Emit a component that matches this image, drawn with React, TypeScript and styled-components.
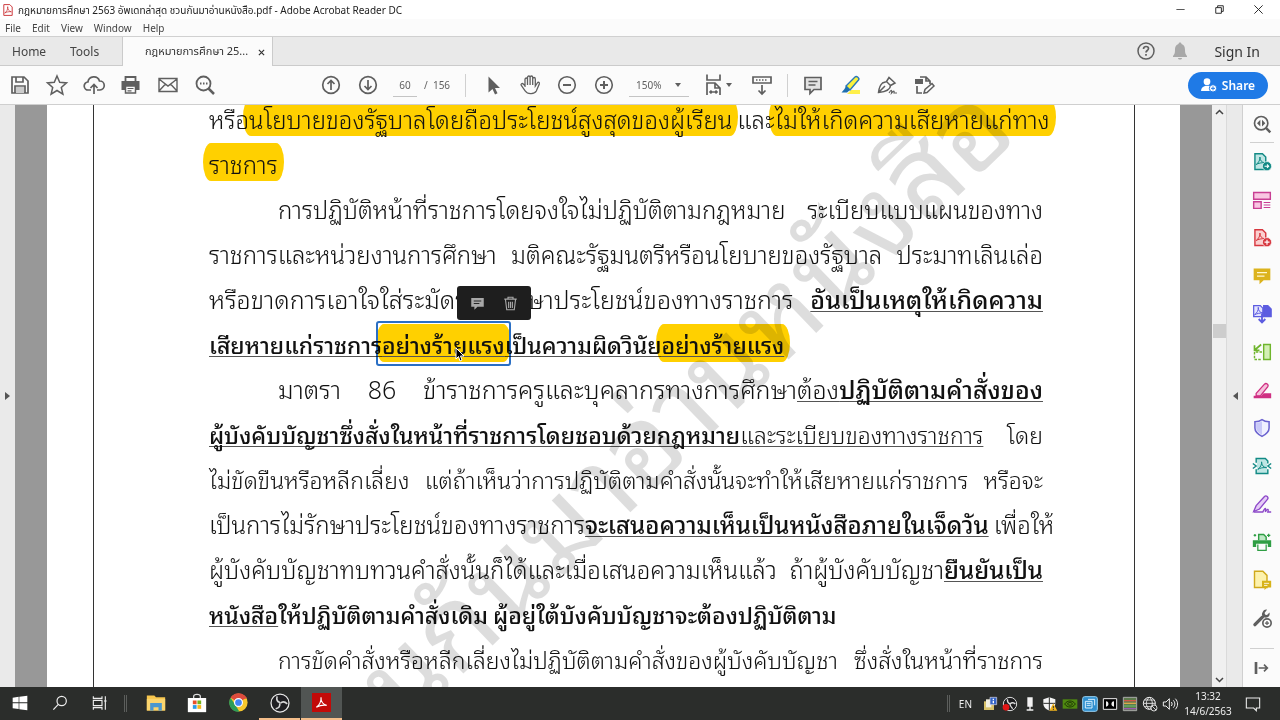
import React from 'react';
import styled, { createGlobalStyle, css } from 'styled-components';

const UI = "'Noto Sans', 'Open Sans', 'Noto Sans Thai', 'Liberation Sans', sans-serif";
const DOC = "'TH Sarabun New', 'Noto Sans Thai Looped', 'Noto Sans Thai', 'Noto Sans', sans-serif";

const Global = createGlobalStyle`
  * { box-sizing: border-box; }
  html, body, #root { height: 100%; }
  body { margin: 0; font-family: ${UI}; color: #3c3c3c; }
  button { border: 0; background: none; padding: 0; margin: 0; font: inherit; color: inherit; }
  a { color: inherit; text-decoration: none; }
`;

const Shell = styled.div`
  display: flex;
  flex-direction: column;
  height: 100vh;
  overflow: hidden;
  background: #fbfbfb;
`;

const TitleBar = styled.header`
  display: flex;
  align-items: center;
  height: 19px;
  flex: none;
  padding: 0 2px;
  background: #fff;
  color: #222;
`;
const Title = styled.h1`
  flex: 1;
  margin: 0 0 0 4px;
  font-size: 10px;
  line-height: 18px;
  font-weight: 400;
  white-space: nowrap;
`;
const WindowButton = styled.button`
  display: grid;
  place-items: center;
  width: 39px;
  height: 19px;
`;

const MenuBar = styled.nav`
  display: flex;
  align-items: center;
  gap: 11px;
  height: 17px;
  flex: none;
  padding-left: 5px;
  font-size: 10px;
  line-height: 16px;
  color: #444;
`;

const TabBar = styled.div`
  display: flex;
  align-items: stretch;
  height: 30px;
  flex: none;
  background: #e9e9e9;
  border-top: 1px solid #d0d0d0;
  border-bottom: 1px solid #cbcbcb;
  font-size: 12px;
`;
const TabButton = styled.button<{ $width: number }>`
  width: ${(p) => p.$width}px;
  padding-left: 12px;
  text-align: left;
  color: #444;
`;
const OpenTab = styled.div`
  display: flex;
  align-items: center;
  justify-content: space-between;
  width: 151px;
  height: 29px;
  padding: 0 7px 0 22px;
  background: #fbfbfb;
  border: solid #cbcbcb;
  border-width: 0 1px;
  font-size: 11px;
  color: #333;
  white-space: nowrap;
`;
const Spacer = styled.div`
  flex: 1;
`;
const Account = styled.div`
  display: flex;
  align-items: center;
  gap: 10px;
  padding-right: 20px;
  color: #5f5f5f;
`;
const SignIn = styled.a`
  margin-left: 12px;
  font-size: 14px;
  color: #333;
`;

const ToolBar = styled.div`
  display: flex;
  align-items: center;
  height: 39px;
  flex: none;
  padding: 0 12px 0 8px;
  border-bottom: 1px solid #cfcfcf;
  color: #5f5f5f;
  font-size: 10px;
`;
const ToolGroup = styled.div<{ $before?: number }>`
  display: flex;
  align-items: center;
  gap: 13px;
  margin-left: ${(p) => p.$before ?? 0}px;
`;
const IconButton = styled.button`
  display: grid;
  place-items: center;
  width: 24px;
  height: 24px;
  flex: none;
`;
const PageInput = styled.input`
  width: 24px;
  height: 24px;
  padding: 0;
  border: 0;
  border-bottom: 1px solid #c4c4c4;
  background: none;
  font: inherit;
  color: inherit;
  text-align: center;
`;
const PageCount = styled.span`
  width: 25px;
  margin-left: -6px;
  white-space: pre;
`;
const Rule = styled.span`
  width: 1px;
  height: 23px;
  background: #d0d0d0;
`;
const ZoomSelect = styled.span`
  display: flex;
  align-items: center;
  width: 60px;
  height: 24px;
  border-bottom: 1px solid #c4c4c4;
  select {
    appearance: none;
    flex: 1;
    min-width: 0;
    padding: 0 0 0 7px;
    border: 0;
    background: none;
    font: inherit;
    color: inherit;
  }
`;
const Caret = styled.span`
  border: 3px solid transparent;
  border-top: 4px solid #5f5f5f;
  border-bottom: 0;
  margin: 0 8px;
`;
const MenuIcon = styled.button`
  display: flex;
  align-items: center;
  width: 35px;
  height: 24px;
  ${Caret} { margin: 0; }
`;
const ShareButton = styled.button`
  display: flex;
  align-items: center;
  justify-content: center;
  gap: 5px;
  width: 80px;
  height: 27px;
  border-radius: 14px;
  background: #1f7ae6;
  color: #fff;
  font-size: 12px;
  font-weight: 600;
`;

const Workspace = styled.div`
  display: flex;
  flex: 1;
  min-height: 0;
`;
const PaneToggle = styled.button`
  display: grid;
  place-items: center;
  width: 15px;
  flex: none;
  background: #eaeaea;
`;
const Viewer = styled.main`
  display: flex;
  flex: 1;
  min-width: 0;
  overflow: hidden;
  padding: 0 32px;
  background: #989898;
`;
const Paper = styled.div`
  display: flex;
  flex: 1;
  min-width: 0;
  padding: 0 45px 0 46px;
  background: #fff;
`;
const Sheet = styled.article`
  position: relative;
  display: flex;
  flex: 1;
  flex-direction: column;
  justify-content: flex-end;
  min-width: 0;
  padding: 0 91px 6px 115px;
  border: solid #333;
  border-width: 0 1px;
  background: #fff;
  font-family: ${DOC};
  font-weight: 300;
  color: #111;
`;
const Line = styled.p<{ $indent?: boolean; $ragged?: boolean; $size?: number }>`
  display: flex;
  flex: none;
  justify-content: ${(p) => (p.$ragged ? 'flex-start' : 'space-between')};
  gap: 5px;
  margin: 0;
  padding-left: ${(p) => (p.$indent ? 69 : 0)}px;
  font-size: ${(p) => p.$size ?? 23}px;
  line-height: 45px;
  height: 45px;
  white-space: nowrap;
`;
const underline = css`
  text-decoration: underline 1px #555;
  text-underline-offset: 2px;
  text-decoration-skip-ink: none;
`;
const Run = styled.span<{ $bold?: boolean; $under?: boolean }>`
  ${(p) => p.$bold && 'font-weight: 500;'}
  ${(p) => p.$under && underline}
`;
const Mark = styled.mark<{ $under?: boolean }>`
  display: inline-block;
  height: 38px;
  margin: 0 -6px;
  padding: 0 6px;
  border-radius: 8px / 19px;
  background: #ffd000;
  color: inherit;
  line-height: 40px;
  mix-blend-mode: multiply;
  ${(p) => p.$under && underline}
`;
const Selected = styled.span`
  position: relative;
  display: inline-block;
  mix-blend-mode: multiply;
`;
const Anchor = styled.span`
  position: relative;
`;
const Outline = styled.span`
  position: absolute;
  inset: 0 -6px;
  border: 2px solid #2a6fc4;
  border-radius: 3px;
`;
const Popup = styled.span`
  position: absolute;
  right: -26px;
  bottom: 42px;
  z-index: 2;
  display: flex;
  align-items: center;
  justify-content: space-evenly;
  width: 74px;
  height: 34px;
  border-radius: 3px;
  background: #1e1e1e;
  color: #a8a8a8;
`;
const Pointer = styled.svg`
  position: absolute;
  right: 40px;
  top: 22px;
  z-index: 2;
`;
const Watermark = styled.div`
  position: absolute;
  left: 52%;
  top: 57%;
  color: #000;
  opacity: 0.13;
  font-size: 114px;
  font-weight: 400;
  line-height: 1;
  white-space: nowrap;
  transform: translate(-50%, -50%) rotate(-44deg);
  pointer-events: none;
`;
const ScrollBar = styled.div`
  display: flex;
  flex-direction: column;
  align-items: center;
  justify-content: space-between;
  width: 15px;
  flex: none;
  padding: 4px 0;
  background: #f0f0f0;
  border-right: 1px solid #dadada;
`;
const Thumb = styled.span`
  width: 13px;
  height: 14px;
  margin-bottom: 130px;
  background: #cdcdcd;
`;
const ToolsPane = styled.aside`
  display: flex;
  flex-direction: column;
  align-items: center;
  width: 38px;
  flex: none;
  border-left: 1px solid #d0d0d0;
`;
const PaneButton = styled.button<{ $rule?: 'top' | 'bottom' }>`
  display: grid;
  place-items: center;
  width: 24px;
  height: 38px;
  flex: none;
  ${(p) => p.$rule === 'bottom' && 'border-bottom: 1px solid #d0d0d0;'}
  ${(p) => p.$rule === 'top' && 'border-top: 1px solid #d0d0d0; margin-top: 11px;'}
`;

const TaskBar = styled.footer`
  display: flex;
  align-items: center;
  height: 33px;
  flex: none;
  background: #2b2d2b;
  color: #eee;
  font-size: 11px;
`;
const TaskButton = styled.button<{ $open?: boolean; $active?: boolean }>`
  display: grid;
  place-items: center;
  width: ${(p) => (p.$open ? 41 : 40)}px;
  height: 33px;
  border-bottom: 2px solid ${(p) => (p.$open ? '#f4bd8a' : 'transparent')};
  background: ${(p) => (p.$active ? '#515553' : 'none')};
`;
const TrayButton = styled.button`
  display: grid;
  place-items: center;
  width: 30px;
  height: 33px;
  margin-right: 12px;
`;
const Pinned = styled.div`
  display: flex;
  gap: 1px;
  margin-left: 9px;
`;
const TaskRule = styled.span<{ $before?: number }>`
  width: 3px;
  height: 17px;
  margin-left: ${(p) => p.$before ?? 0}px;
  border: solid #5c5e5c;
  border-width: 0 1px;
`;
const Tray = styled.div`
  display: flex;
  align-items: center;
  gap: 4px;
  margin-left: 9px;
`;
const Language = styled.span`
  margin-right: 6px;
  font-size: 10px;
`;
const Clock = styled.time`
  width: 60px;
  line-height: 15px;
  font-size: 10px;
  text-align: center;
`;

type G = { children: React.ReactNode; s?: number; w?: number };
const Icon = ({ children, s = 24, w = 2 }: G) => (
  <svg width={s} height={s} viewBox="0 0 24 24" fill="none" stroke="currentColor" strokeWidth={w} aria-hidden="true">
    {children}
  </svg>
);

const PdfSwirl = ({ c, x = 0, y = 0 }: { c: string; x?: number; y?: number }) => (
  <path
    d={`M${x + 5} ${y + 15}c3-2 5-6 4.500-9 0 4 2 6.500 6 7-4-.5-8 .5-10.500 2`}
    stroke={c}
    strokeWidth="1.200"
  />
);

const fileTools = [
  ['Save', <><path d="M4 4h12l4 4v12H4zM8 4v5h7V4M7 20v-7h10v7" strokeWidth="1.700" /><path d="M8 14h8v6H8z" fill="#ccc" stroke="none" /></>],
  ['Star', <path d="M12 3l2.700 6.300 6.800.6-5.200 4.500 1.600 6.700-5.900-3.600-5.900 3.600 1.600-6.700-5.200-4.500 6.800-.6z" strokeWidth="1.500" />],
  ['Upload', <path d="M9 17H6.500a4 4 0 01-.6-8A6 6 0 0117.500 8a4.500 4.500 0 01.5 9h-3M12 21v-9M8.500 15l3.500-3.500 3.500 3.500" strokeWidth="1.700" />],
  ['Print', <><path d="M6.500 8V4h10v4" strokeWidth="1.800" /><path d="M2.500 8h18v9h-4v-3h-10v3h-4z" fill="currentColor" stroke="none" /><path d="M6.500 13h10v7h-10z" fill="#fbfbfb" strokeWidth="1.500" /><path d="M8.500 15.500h6M8.500 17.800h4" strokeWidth="1.200" /></>],
  ['Mail', <path d="M3 5.500h18v13H3zM3 6l9 7 9-7M3 18l6.500-7M21 18l-6.500-7" strokeWidth="1.400" />],
  ['Search', <><circle cx="10.500" cy="10.500" r="7" strokeWidth="1.800" /><path d="M15.500 15.500l5.500 5.500" strokeWidth="2.500" /><path d="M7 10.500h1.500M10 10.500h1.500M13 10.500h1.500" /></>],
] as const;

const zoomTools = [
  ['Select', <path d="M7.500 3.500v16l4-3.500 2.500 5.500 2.500-1.200-2.500-5.300h5z" fill="currentColor" stroke="none" />],
  ['Hand', <path d="M7 14V6.500c0-2 2.500-2 2.500 0V12 4.500c0-2 2.600-2 2.600 0V12 4.500c0-2 2.600-2 2.600 0V12 6c0-2 2.600-2 2.600 0v7l2-3c1-1.500 2.500-.5 2 1l-3 7c-1.500 3-8.500 4-11 0l-4-5.500c-1-1.500 1-2.700 2-1.500l2 2" strokeWidth="1.300" />],
  ['Zoom out', <><circle cx="12" cy="12" r="8.300" strokeWidth="1.600" /><path d="M8 12h8" /></>],
  ['Zoom in', <><circle cx="12" cy="12" r="8.300" strokeWidth="1.600" /><path d="M8 12h8M12 8v8" /></>],
] as const;

const markTools = [
  ['Comment', <path d="M4 4.500h16v12h-7l-4 4v-4H4zM7.500 8.500h9M7.500 12h7" strokeWidth="1.700" fill="#e2e2e2" />],
  ['Highlight', <><path d="M9 21l4-4h9v4z" fill="#fff04a" stroke="none" /><path d="M8 13L17 4c1.500-1.500 5 1 3.500 3L12 17z" fill="#fbf23c" stroke="#2a78b8" strokeWidth="1.400" /><path d="M8 13l4 4-3 2.500H3.500L6.500 16z" fill="#1f6faf" stroke="none" /></>],
  ['Sign', <><path d="M3.500 19.500C4 15 5 12 7.500 10l4-1.500 4 4c0 3-3 6-12 7zM4 19l6-6M11.500 8.500L14 4.500l6 5.500-4.500 2.500" strokeWidth="1.500" /><path d="M14 20c2.500-4 3-3 2.500 0 2.500-3 3-2 2.500 0h3" strokeWidth="1.200" /></>],
  ['Edit', <><path d="M8 4h6l4 4v3M14 4v4h4M5 13v7h5" strokeWidth="1.700" /><path d="M3 6h8v5H3z" fill="currentColor" stroke="none" /><path d="M12 20l1-3.500 7-6 2 2.500-7 6.500z" strokeWidth="1.500" /></>],
] as const;

const page = (c: string, f: string) => (
  <>
    <path d="M3.500 2h9l4 4v15h-13z" fill={f} stroke={c} strokeWidth="1.700" />
    <PdfSwirl c={c} />
  </>
);

const sideTools = [
  ['Export PDF', <>{page('#128a85', '#bfe6e4')}<circle cx="18" cy="17" r="5.500" fill="#128a85" stroke="#fff" strokeWidth=".8" /><path d="M15 17h5M18 15l2 2-2 2" stroke="#fff" strokeWidth="1.300" /></>],
  ['Organize', <g stroke="#c83f93" strokeWidth="1.700"><path d="M2 3h20v8H2zM2 14h9v8H2z" fill="#f9c6e2" /><path d="M14 15h8M14 18h8M14 21h8" strokeWidth="1.200" /></g>],
  ['Create PDF', <>{page('#d7373f', '#fbcfcf')}<circle cx="18" cy="17" r="5.500" fill="#d7373f" stroke="#fff" strokeWidth=".8" /><path d="M15 17h6M18 14v6" stroke="#fff" strokeWidth="1.400" /></>],
  ['Comment', <><path d="M2 3h20v14h-8l-5 5v-5H2z" fill="#dcb31d" stroke="none" /><path d="M6 8h12M6 12h9" stroke="#fff8d0" strokeWidth="1.500" /></>],
  ['Combine', <g stroke="#5c5ce0" strokeWidth="1.500"><path d="M14 2h5l4 4v9h-9z" fill="#5c5ce0" /><path d="M2 2h8l3 3v10H2z" fill="#e3e3ff" /><PdfSwirl c="#5c5ce0" x={-2} y={-2} /><path d="M12 12v10M8 18l4 4 4-4" strokeWidth="2.200" /></g>],
  ['Rearrange', <g stroke="#6fb52c" strokeWidth="1.700"><path d="M14 3h8v18h-8z" fill="#d3efb4" /><path d="M12 12H3v9h9" strokeDasharray="3 1.500" /><path d="M11 3L4 9M3 4v6h6" strokeWidth="2" /></g>],
  ['Redact', <g stroke="#cf2f82"><path d="M5 16L15 5c2-2 5.500.5 4 3L10 19H5z" fill="#f6c1dc" strokeWidth="1.600" /><path d="M2 22v-3h9l3-3h9v6z" fill="#cf2f82" stroke="none" /></g>],
  ['Protect', <><path d="M12 2c2 1.500 5 2.500 8.500 2.500V12c0 5-4.500 8-8.500 10-4-2-8.500-5-8.500-10V4.500C7 4.500 10 3.500 12 2z" fill="#f0f0ff" stroke="#6a62cf" strokeWidth="1.800" /><path d="M12 4v16c-3-1.500-7-4-7-8V6c2.500 0 5-.5 7-2z" fill="#c9c9f8" stroke="none" /></>],
  ['Compress', <g stroke="#128a85" strokeWidth="1.700"><path d="M5 8V3h11l3 3v3M5 16v5h14v-5" fill="#bfe6e4" /><path d="M6 8h12v9H6z" fill="#bfe6e4" stroke="none" /><PdfSwirl c="#128a85" x={2} y={1} /><path d="M1 9l4 3-4 3M23 9l-4 3 4 3" /></g>],
  ['Fill and sign', <g stroke="#8d49c9"><path d="M2 21l3-7L15 3c2-2 5.500 1 3.500 3.500L9 18z" fill="#e6ccf7" strokeWidth="1.600" /><path d="M2 21.500h11c3-6 4-5 3 0 3-5 4-3 3 0h4" strokeWidth="1.700" /></g>],
  ['Print production', <g stroke="#2f9e44"><path d="M8 10V3h6l3 3v4" fill="#bfe8c6" strokeWidth="1.700" /><path d="M1 10h22v8h-4v-4H5v4H1z" fill="#2f9e44" stroke="none" /><path d="M7 15v7h10v-7M2 4h3M3.500 2.500v3M20 2v4M18 4h4" strokeWidth="1.500" /></g>],
  ['Send for comments', <><path d="M3 1.500h10l5 5V21H3z" fill="#fdf2ac" stroke="#d0a91a" strokeWidth="1.700" /><path d="M12 13h11v8h-5l-3 3v-3h-3z" fill="#d8b318" stroke="none" /><path d="M14.500 16h6M14.500 18.500h4" stroke="#fff" strokeWidth="1" /></>],
  ['More tools', <g stroke="#5f5f5f"><path d="M3.500 20l9-9" strokeWidth="4" strokeLinecap="round" /><path d="M18 2l-3 4 1 2 2 .5 3-3c1 4-2 7-6 6-3-1-4-4-2-7 1-2 3-3 5-2.500z" fill="#5f5f5f" stroke="none" /><circle cx="18" cy="18" r="5" fill="#fff" strokeWidth="2" /><path d="M15.500 18h5M18 15.500v5" strokeWidth="1.500" /></g>],
] as const;

const AcrobatLogo = ({ s, solid }: { s: number; solid?: boolean }) => (
  <svg width={s} height={s} viewBox="0 0 20 20" fill="none" aria-hidden="true">
    <path d={solid ? 'M0 0h20v20H0z' : 'M3 1h10l4 4v14H3z'} fill={solid ? '#c20a08' : '#fff'} stroke={solid ? 'none' : '#c8282d'} strokeWidth="1.500" />
    <path d="M4.500 15c3-1.500 5.500-6 5-10.500-.5 4.500 2.500 8 6 8.500-4-.7-8 .5-11 2z" stroke={solid ? '#fff' : '#c8282d'} strokeWidth="1.200" />
  </svg>
);

const ObsLogo = ({ s }: { s: number }) => (
  <Icon s={s} w={1.5}>
    <circle cx="12" cy="12" r="10.800" fill="#1f1f22" stroke="#e8e8e8" />
    <g stroke="#d8d8d8" strokeWidth="1.900">
      <path d="M8.500 4c-1 4 0 6.500 3.500 7.500" />
      <path d="M8.500 4c-1 4 0 6.500 3.500 7.500" transform="rotate(120 12 12)" />
      <path d="M8.500 4c-1 4 0 6.500 3.500 7.500" transform="rotate(240 12 12)" />
    </g>
  </Icon>
);

const Chev = ({ up }: { up?: boolean }) => (
  <svg width="9" height="6" viewBox="0 0 9 6" fill="none" stroke="#444" strokeWidth="1.500" aria-hidden="true">
    <path d={up ? 'M1 5l3.500-3.500L8 5' : 'M1 1l3.500 3.500L8 1'} />
  </svg>
);

const Arrow = ({ left }: { left?: boolean }) => (
  <svg width="6" height="8" viewBox="0 0 6 8" fill="#555" aria-hidden="true">
    <path d={left ? 'M6 0v8L1 4z' : 'M0 0v8l5-4z'} />
  </svg>
);

const Tools = ({ items }: { items: readonly (readonly [string, React.JSX.Element])[] }) => (
  <>
    {items.map(([label, art]) => (
      <IconButton key={label} aria-label={label}><Icon>{art}</Icon></IconButton>
    ))}
  </>
);

const trayIcons = [
  ['Documents', <><path d="M3 8h15v13H3z" fill="#d9c26a" stroke="none" /><path d="M6 5h8v12H6z" fill="#f4f0e0" stroke="none" /><path d="M12 2h10v11H12z" fill="#3464c8" stroke="#dde" strokeWidth="1" /><path d="M17 4v2M17 7v4" stroke="#fff" /></>],
  ['Recorder', <><circle cx="12" cy="12" r="10" fill="#1d1d1f" stroke="#ddd" strokeWidth="1.500" /><path d="M8 5c0 4 1 6 4 7 3-3 6-2 8 0M12 12c0 3 2 5 4 7" stroke="#ddd" /><circle cx="6" cy="17" r="5" fill="#e01616" stroke="none" /></>],
  ['Microphone', <path d="M8 2h8v14H8zM11 16h2v4h4v2H7v-2h4z" fill="#f2f2f2" stroke="none" />],
  ['Security', <><path d="M11 2l9 3v6c0 6-4 9-9 11-5-2-9-5-9-11V5z" fill="#f4f4f4" stroke="none" /><path d="M11 2v20M2 11h18" stroke="#2b2d2b" strokeWidth="1.500" /><path d="M17 11l6 11H11z" fill="#f2b51c" stroke="none" /><path d="M17 15v3M17 19v2" stroke="#333" strokeWidth="1.500" /></>],
  ['Graphics', <><path d="M1 5h22v14H1z" fill="#4f8a10" stroke="none" /><path d="M4 12c4-6 12-6 16 0-4 6-12 6-16 0zM8 12c2-3 6-3 8 0-2 3-6 2-8 0z" stroke="#1d3405" strokeWidth="1.500" /></>],
  ['Display', <><rect x="1" y="1" width="22" height="22" rx="3" fill="#2f8fce" stroke="#9ad3f4" strokeWidth="1.500" /><path d="M5 8h10v10H5zM9 5h10v9M7 11h6M7 14h6" stroke="#d8f0ff" strokeWidth="1.500" /></>],
  ['Audio', <><path d="M2 4h20v16H2z" fill="#000" stroke="#eee" strokeWidth="1.500" /><path d="M6 8c5 0 5 8 0 8zM18 8c-5 0-5 8 0 8z" fill="#eee" stroke="none" /></>],
  ['Monitor', <><path d="M2 2h20v20H2z" fill="#5d7a4c" stroke="#aaa" strokeWidth="1.500" /><path d="M3 7h18" stroke="#d1584a" /><path d="M3 11h18" stroke="#dca94a" /><path d="M3 15h18" stroke="#67b366" /><path d="M3 19h18" stroke="#9a5ab0" /></>],
  ['Network', <><circle cx="11" cy="11" r="9" stroke="#eee" strokeWidth="1.500" /><path d="M2 11h18M11 2c-6 5-6 13 0 18M11 2c6 5 6 13 0 18M4 6h14M4 16h14" stroke="#eee" strokeWidth="1.300" /><circle cx="18" cy="18" r="4.500" fill="#2b2d2b" stroke="#eee" strokeWidth="1.300" /><path d="M15 15l6 6" stroke="#eee" strokeWidth="1.300" /></>],
  ['Volume', <path d="M2 9h4l5-5v16l-5-5H2zM14 9c1.500 2 1.500 4 0 6M17 6.500c3 3.500 3 7.500 0 11M20 4c4.500 5 4.500 11 0 16" stroke="#eee" strokeWidth="1.500" />],
] as const;

export default function App() {
  return (
    <>
      <Global />
      <Shell>
        <TitleBar>
          <AcrobatLogo s={12} />
          <Title>กฎหมายการศึกษา 2563 อัพเดทล่าสุด ชวนกันมาอ่านหนังสือ.pdf - Adobe Acrobat Reader DC</Title>
          <WindowButton aria-label="Minimize"><Icon s={9} w={2}><path d="M1 12h22" /></Icon></WindowButton>
          <WindowButton aria-label="Restore"><Icon s={9} w={2.5}><path d="M2 7h15v15H2zM7 7V2h15v15h-5" /></Icon></WindowButton>
          <WindowButton aria-label="Close"><Icon s={9} w={2.5}><path d="M1 1l22 22M23 1L1 23" /></Icon></WindowButton>
        </TitleBar>

        <MenuBar>
          {['File', 'Edit', 'View', 'Window', 'Help'].map((m) => <button key={m}>{m}</button>)}
        </MenuBar>

        <TabBar>
          <TabButton $width={58}>Home</TabButton>
          <TabButton $width={64}>Tools</TabButton>
          <OpenTab>
            <span>กฎหมายการศึกษา 25...</span>
            <button aria-label="Close tab"><Icon s={7} w={4}><path d="M3 3l18 18M21 3L3 21" /></Icon></button>
          </OpenTab>
          <Spacer />
          <Account>
            <IconButton aria-label="Help"><Icon w={1.5}><circle cx="12" cy="12" r="8" /><path d="M9.500 10c0-3.500 5-3 5-.5 0 2-2.500 2-2.500 4M12 15v1.800" strokeWidth="1.700" /></Icon></IconButton>
            <IconButton aria-label="Notifications"><Icon><path d="M12 3.500c1 0 1.500.7 1.500 1.500 3 1 3.500 3.500 3.500 6 0 3 .5 4.500 2 6v1H5v-1c1.500-1.500 2-3 2-6 0-2.500.5-5 3.500-6 0-.8.500-1.500 1.500-1.500zM10 19h4c0 2-4 2-4 0z" fill="#a8a8a8" stroke="none" /></Icon></IconButton>
            <SignIn href="#signin">Sign In</SignIn>
          </Account>
        </TabBar>

        <ToolBar>
          <ToolGroup><Tools items={fileTools} /></ToolGroup>
          <ToolGroup $before={102}>
            <IconButton aria-label="Previous page"><Icon w={1.7}><circle cx="12" cy="12" r="8.300" /><path d="M12 17V7.500M8.500 11L12 7.500l3.500 3.500" /></Icon></IconButton>
            <IconButton aria-label="Next page"><Icon w={1.7}><circle cx="12" cy="12" r="8.300" /><path d="M12 7v9.500M8.500 13l3.500 3.500 3.500-3.500" /></Icon></IconButton>
            <PageInput aria-label="Page number" defaultValue="60" />
            <PageCount>/  156</PageCount>
          </ToolGroup>
          <ToolGroup $before={16}><Rule /></ToolGroup>
          <ToolGroup $before={15}>
            <Tools items={zoomTools} />
            <ZoomSelect>
              <select aria-label="Zoom level" defaultValue="150%"><option>150%</option></select>
              <Caret />
            </ZoomSelect>
          </ToolGroup>
          <ToolGroup $before={13}>
            <MenuIcon aria-label="Page width">
              <Icon w={1.7}><path d="M5 1.500V7h13V1.500M5 22V10h8l5 5v7M13 10v5h5M8 19h7M9.500 17.500L8 19l1.500 1.500M13.500 17.500L15 19l-1.500 1.500" /></Icon>
              <Caret />
            </MenuIcon>
            <IconButton aria-label="Scrolling"><Icon w={1.7}><path d="M3 4h18v6H3zM12 12v9M8.500 17.500L12 21l3.500-3.500" /><path d="M6 7h12" strokeDasharray="1.500 1.500" /></Icon></IconButton>
            <Rule />
            <Tools items={markTools} />
          </ToolGroup>
          <Spacer />
          <ShareButton>
            <Icon s={16}><circle cx="9" cy="7" r="5" fill="#fff" stroke="none" /><path d="M0 21c0-5 3-7 7-8h4c3 0 6 3 6 8z" fill="#fff" stroke="none" /><circle cx="18" cy="17" r="5.500" fill="#fff" stroke="#1f7ae6" strokeWidth="1.500" /><path d="M15 17h6M18 14v6" stroke="#1f7ae6" strokeWidth="1.500" /></Icon>
            Share
          </ShareButton>
        </ToolBar>

        <Workspace>
          <PaneToggle aria-label="Open navigation pane"><Arrow /></PaneToggle>
          <Viewer>
            <Paper>
              <Sheet>
                <Line $size={24}>
                  <Run>หรือ<Mark>นโยบายของรัฐบาลโดยถือประโยชน์สูงสุดของผู้เรียน</Mark></Run>
                  <Run>และ<Mark>ไม่ให้เกิดความเสียหายแก่ทาง</Mark></Run>
                </Line>
                <Line $ragged $size={24}><Run><Mark>ราชการ</Mark></Run></Line>
                <Line $indent $size={24}>
                  <Run>การปฏิบัติหน้าที่ราชการโดยจงใจไม่ปฏิบัติตามกฎหมาย</Run>
                  <Run>ระเบียบแบบแผนของทาง</Run>
                </Line>
                <Line $size={24}>
                  <Run>ราชการและหน่วยงานการศึกษา</Run>
                  <Run>มติคณะรัฐมนตรีหรือนโยบายของรัฐบาล</Run>
                  <Run>ประมาทเลินเล่อ</Run>
                </Line>
                <Line $size={25}>
                  <Run>หรือขาดการเอาใจใส่ระมัดระวังรักษาประโยชน์ของทางราชการ</Run>
                  <Run $bold $under>อันเป็นเหตุให้เกิดความ</Run>
                </Line>
                <Line $ragged>
                  <Run $bold $under>
                    เสียหายแก่ราชการ
                    <Selected>
                      <Mark $under>อย่างร้ายแรง</Mark>
                      <Outline />
                    </Selected>
                    <Anchor>
                      <Popup>
                        <IconButton aria-label="Add note"><Icon s={15}><path d="M2 3h20v14H12l-5 5v-5H2z" fill="currentColor" stroke="none" /><path d="M6 8h12M6 12h9" stroke="#1e1e1e" strokeWidth="1.500" /></Icon></IconButton>
                        <IconButton aria-label="Delete"><Icon s={15} w={1.8}><path d="M2 5h20M8 5V2h8v3M4 6l2 16h12l2-16M9 9v10M12 9v10M15 9v10" /></Icon></IconButton>
                      </Popup>
                      <Pointer width="10" height="16" viewBox="0 0 10 16" aria-hidden="true"><path d="M1 1v11l2.500-2.500L5 14l2-1-1.500-4H9z" fill="#000" stroke="#fff" strokeWidth="1" /></Pointer>
                    </Anchor>
                    เป็นความผิดวินัย<Mark $under>อย่างร้ายแรง</Mark>
                  </Run>
                </Line>
                <Line $indent $size={25}>
                  <Run>มาตรา</Run>
                  <Run>86</Run>
                  <Run>ข้าราชการครูและบุคลากรทางการศึกษา<Run $under>ต้อง</Run><Run $bold $under>ปฏิบัติตามคำสั่งของ</Run></Run>
                </Line>
                <Line>
                  <Run><Run $bold $under>ผู้บังคับบัญชาซึ่งสั่งในหน้าที่ราชการโดยชอบด้วยกฎหมาย</Run><Run $under>และระเบียบของทางราชการ</Run></Run>
                  <Run>โดย</Run>
                </Line>
                <Line>
                  <Run>ไม่ขัดขืนหรือหลีกเลี่ยง</Run>
                  <Run>แต่ถ้าเห็นว่าการปฏิบัติตามคำสั่งนั้นจะทำให้เสียหายแก่ราชการ</Run>
                  <Run>หรือจะ</Run>
                </Line>
                <Line $size={24}>
                  <Run>เป็นการไม่รักษาประโยชน์ของทางราชการ<Run $bold $under>จะเสนอความเห็นเป็นหนังสือภายในเจ็ดวัน</Run></Run>
                  <Run>เพื่อให้</Run>
                </Line>
                <Line $size={24}>
                  <Run>ผู้บังคับบัญชาทบทวนคำสั่งนั้นก็ได้และเมื่อเสนอความเห็นแล้ว</Run>
                  <Run>ถ้าผู้บังคับบัญชา<Run $bold $under>ยืนยันเป็น</Run></Run>
                </Line>
                <Line $ragged>
                  <Run $bold><Run $bold $under>หนังสือ</Run>ให้ปฏิบัติตามคำสั่งเดิม</Run>
                  <Run $bold>ผู้อยู่ใต้บังคับบัญชาจะต้องปฏิบัติตาม</Run>
                </Line>
                <Line $indent>
                  <Run>การขัดคำสั่งหรือหลีกเลี่ยงไม่ปฏิบัติตามคำสั่งของผู้บังคับบัญชา</Run>
                  <Run>ซึ่งสั่งในหน้าที่ราชการ</Run>
                </Line>
                <Watermark>ชวนกันมาอ่านหนังสือ</Watermark>
              </Sheet>
            </Paper>
          </Viewer>
          <ScrollBar><Chev up /><Thumb /><Chev /></ScrollBar>
          <PaneToggle aria-label="Collapse tools pane"><Arrow left /></PaneToggle>
          <ToolsPane>
            <PaneButton $rule="bottom" aria-label="Search tools"><Icon s={20}><circle cx="11" cy="11" r="8" strokeWidth="2" stroke="#5f5f5f" /><path d="M17 17l5 5" stroke="#5f5f5f" strokeWidth="3" /><path d="M10 7v8l-4-4zM12 7v8l4-4z" fill="#5f5f5f" stroke="none" /></Icon></PaneButton>
            {sideTools.map(([label, art]) => (
              <PaneButton key={label} aria-label={label}><Icon s={20}>{art}</Icon></PaneButton>
            ))}
            <PaneButton $rule="top" aria-label="Hide pane"><Icon s={16}><path d="M3 3v18" stroke="#5f5f5f" strokeWidth="4" /><path d="M7 12h13M15 7l5 5-5 5" stroke="#5f5f5f" strokeWidth="2.500" /></Icon></PaneButton>
          </ToolsPane>
        </Workspace>

        <TaskBar>
          <TaskButton aria-label="Start"><Icon s={16}><path d="M1 4l9-1.300V11H1zM11 2.500L23 1v10H11zM1 12.500h9V21l-9-1.300zM11 12.500h12V23l-12-1.700z" fill="#fff" stroke="none" /></Icon></TaskButton>
          <TaskButton aria-label="Search"><Icon s={16} w={1.8}><circle cx="14.500" cy="9" r="7" /><path d="M9.500 14L2 22" /></Icon></TaskButton>
          <TaskButton aria-label="Task view"><Icon s={16} w={1.7}><path d="M2 2v3h13V2M2 8h13v8H2zM2 22v-3h13v3M20 2v20M18 9h4" /></Icon></TaskButton>
          <TaskRule $before={4} />
          <Pinned>
            <TaskButton aria-label="Files"><Icon s={20}><path d="M1 3h9l2 2h11v16H1z" fill="#f7c64d" stroke="none" /><path d="M1 7h22v14H1z" fill="#fbd56e" stroke="none" /><path d="M5 21v-9h14v9h-4v-4H9v4z" fill="#4a97cf" stroke="none" /></Icon></TaskButton>
            <TaskButton aria-label="Store"><Icon s={20}><path d="M8 7V4c0-3 8-3 8 0v3" stroke="#ddd" strokeWidth="1.500" /><path d="M1 6h22v17H1z" fill="#fff" stroke="none" /><path d="M7 9h4.500v4.500H7z" fill="#e8502a" stroke="none" /><path d="M12.500 9H17v4.500h-4.500z" fill="#74b41c" stroke="none" /><path d="M7 14.500h4.500V19H7z" fill="#2a9be8" stroke="none" /><path d="M12.500 14.500H17V19h-4.500z" fill="#f5b81c" stroke="none" /></Icon></TaskButton>
            <TaskButton aria-label="Chrome"><Icon s={19}><circle cx="12" cy="12" r="11.500" fill="#f7c82e" stroke="none" /><path d="M12 12L2 6A11.500 11.500 0 0122 6z" fill="#dd4b3e" stroke="none" /><path d="M2 6l6 9 5 8.500A11.500 11.500 0 012 6z" fill="#2c9c57" stroke="none" /><path d="M12 6h10" stroke="#dd4b3e" strokeWidth="2" /><circle cx="12" cy="12" r="5" fill="#4285f4" stroke="#fff" strokeWidth="1.500" /></Icon></TaskButton>
            <TaskButton $open aria-label="OBS"><ObsLogo s={20} /></TaskButton>
            <TaskButton $open $active aria-label="Acrobat Reader"><AcrobatLogo s={19} solid /></TaskButton>
          </Pinned>
          <Spacer />
          <TaskRule />
          <Tray>
            <Language>EN</Language>
            {trayIcons.map(([label, art]) => <Icon key={label} s={16}>{art}</Icon>)}
          </Tray>
          <Clock>13:32<br />14/6/2563</Clock>
          <TrayButton aria-label="Notifications"><Icon s={16} w={1.6}><path d="M2 3h20v15h-5v4l-4-4H2z" /></Icon></TrayButton>
        </TaskBar>
      </Shell>
    </>
  );
}
